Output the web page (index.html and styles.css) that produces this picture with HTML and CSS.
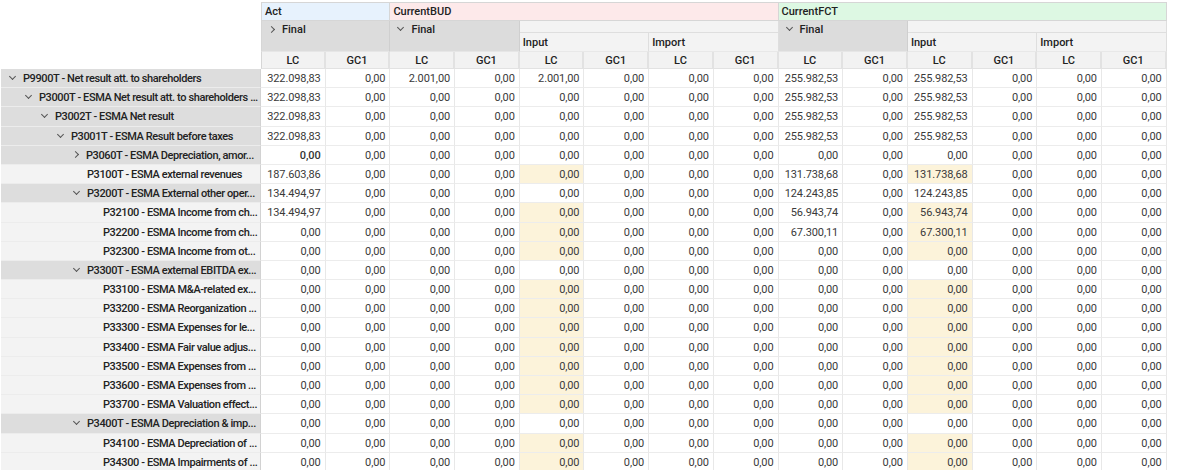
FILE: index.html
```html
<!DOCTYPE html>
<html>
<head>
<meta charset="utf-8">
<link rel="stylesheet" href="styles.css">
</head>
<body>
<div class="grid">
  <div class="corner"></div>
  <div class="h1 act">Act</div>
  <div class="h1 bud">CurrentBUD</div>
  <div class="h1 fct">CurrentFCT</div>

  <div class="fin"><i class="rt"></i>Final</div>
  <div class="fin"><i class="dn"></i>Final</div>
  <div class="emp"></div>
  <div class="fin"><i class="dn"></i>Final</div>
  <div class="emp"></div>

  <div class="sub">Input</div>
  <div class="sub">Import</div>
  <div class="sub">Input</div>
  <div class="sub">Import</div>

  <div class="m">LC</div><div class="m">GC1</div>
  <div class="m">LC</div><div class="m">GC1</div>
  <div class="m">LC</div><div class="m">GC1</div>
  <div class="m">LC</div><div class="m">GC1</div>
  <div class="m">LC</div><div class="m">GC1</div>
  <div class="m">LC</div><div class="m">GC1</div>
  <div class="m">LC</div><div class="m">GC1</div>

  <div class="lab exp l0"><i class="dn"></i>P9900T - Net result att. to shareholders</div>
  <div class="n">322.098,83</div><div class="n">0,00</div><div class="n">2.001,00</div><div class="n">0,00</div><div class="n">2.001,00</div><div class="n">0,00</div><div class="n">0,00</div><div class="n">0,00</div><div class="n">255.982,53</div><div class="n">0,00</div><div class="n">255.982,53</div><div class="n">0,00</div><div class="n">0,00</div><div class="n">0,00</div>

  <div class="lab exp l1"><i class="dn"></i>P3000T - ESMA Net result att. to shareholders ...</div>
  <div class="n">322.098,83</div><div class="n">0,00</div><div class="n">0,00</div><div class="n">0,00</div><div class="n">0,00</div><div class="n">0,00</div><div class="n">0,00</div><div class="n">0,00</div><div class="n">255.982,53</div><div class="n">0,00</div><div class="n">255.982,53</div><div class="n">0,00</div><div class="n">0,00</div><div class="n">0,00</div>

  <div class="lab exp l2"><i class="dn"></i>P3002T - ESMA Net result</div>
  <div class="n">322.098,83</div><div class="n">0,00</div><div class="n">0,00</div><div class="n">0,00</div><div class="n">0,00</div><div class="n">0,00</div><div class="n">0,00</div><div class="n">0,00</div><div class="n">255.982,53</div><div class="n">0,00</div><div class="n">255.982,53</div><div class="n">0,00</div><div class="n">0,00</div><div class="n">0,00</div>

  <div class="lab exp l3"><i class="dn"></i>P3001T - ESMA Result before taxes</div>
  <div class="n">322.098,83</div><div class="n">0,00</div><div class="n">0,00</div><div class="n">0,00</div><div class="n">0,00</div><div class="n">0,00</div><div class="n">0,00</div><div class="n">0,00</div><div class="n">255.982,53</div><div class="n">0,00</div><div class="n">255.982,53</div><div class="n">0,00</div><div class="n">0,00</div><div class="n">0,00</div>

  <div class="lab exp l4"><i class="rt"></i>P3060T - ESMA Depreciation, amor...</div>
  <div class="n b">0,00</div><div class="n">0,00</div><div class="n">0,00</div><div class="n">0,00</div><div class="n">0,00</div><div class="n">0,00</div><div class="n">0,00</div><div class="n">0,00</div><div class="n">0,00</div><div class="n">0,00</div><div class="n">0,00</div><div class="n">0,00</div><div class="n">0,00</div><div class="n">0,00</div>

  <div class="lab leaf l4">P3100T - ESMA external revenues</div>
  <div class="n">187.603,86</div><div class="n">0,00</div><div class="n">0,00</div><div class="n">0,00</div><div class="n y">0,00</div><div class="n">0,00</div><div class="n">0,00</div><div class="n">0,00</div><div class="n">131.738,68</div><div class="n">0,00</div><div class="n y">131.738,68</div><div class="n">0,00</div><div class="n">0,00</div><div class="n">0,00</div>

  <div class="lab exp l4"><i class="dn"></i>P3200T - ESMA External other oper...</div>
  <div class="n">134.494,97</div><div class="n">0,00</div><div class="n">0,00</div><div class="n">0,00</div><div class="n">0,00</div><div class="n">0,00</div><div class="n">0,00</div><div class="n">0,00</div><div class="n">124.243,85</div><div class="n">0,00</div><div class="n">124.243,85</div><div class="n">0,00</div><div class="n">0,00</div><div class="n">0,00</div>

  <div class="lab leaf l5">P32100 - ESMA Income from ch...</div>
  <div class="n">134.494,97</div><div class="n">0,00</div><div class="n">0,00</div><div class="n">0,00</div><div class="n y">0,00</div><div class="n">0,00</div><div class="n">0,00</div><div class="n">0,00</div><div class="n">56.943,74</div><div class="n">0,00</div><div class="n y">56.943,74</div><div class="n">0,00</div><div class="n">0,00</div><div class="n">0,00</div>

  <div class="lab leaf l5">P32200 - ESMA Income from ch...</div>
  <div class="n">0,00</div><div class="n">0,00</div><div class="n">0,00</div><div class="n">0,00</div><div class="n y">0,00</div><div class="n">0,00</div><div class="n">0,00</div><div class="n">0,00</div><div class="n">67.300,11</div><div class="n">0,00</div><div class="n y">67.300,11</div><div class="n">0,00</div><div class="n">0,00</div><div class="n">0,00</div>

  <div class="lab leaf l5">P32300 - ESMA Income from ot...</div>
  <div class="n">0,00</div><div class="n">0,00</div><div class="n">0,00</div><div class="n">0,00</div><div class="n y">0,00</div><div class="n">0,00</div><div class="n">0,00</div><div class="n">0,00</div><div class="n">0,00</div><div class="n">0,00</div><div class="n y">0,00</div><div class="n">0,00</div><div class="n">0,00</div><div class="n">0,00</div>

  <div class="lab exp l4"><i class="dn"></i>P3300T - ESMA external EBITDA ex...</div>
  <div class="n">0,00</div><div class="n">0,00</div><div class="n">0,00</div><div class="n">0,00</div><div class="n">0,00</div><div class="n">0,00</div><div class="n">0,00</div><div class="n">0,00</div><div class="n">0,00</div><div class="n">0,00</div><div class="n">0,00</div><div class="n">0,00</div><div class="n">0,00</div><div class="n">0,00</div>

  <div class="lab leaf l5">P33100 - ESMA M&amp;A-related ex...</div>
  <div class="n">0,00</div><div class="n">0,00</div><div class="n">0,00</div><div class="n">0,00</div><div class="n y">0,00</div><div class="n">0,00</div><div class="n">0,00</div><div class="n">0,00</div><div class="n">0,00</div><div class="n">0,00</div><div class="n y">0,00</div><div class="n">0,00</div><div class="n">0,00</div><div class="n">0,00</div>

  <div class="lab leaf l5">P33200 - ESMA Reorganization ...</div>
  <div class="n">0,00</div><div class="n">0,00</div><div class="n">0,00</div><div class="n">0,00</div><div class="n y">0,00</div><div class="n">0,00</div><div class="n">0,00</div><div class="n">0,00</div><div class="n">0,00</div><div class="n">0,00</div><div class="n y">0,00</div><div class="n">0,00</div><div class="n">0,00</div><div class="n">0,00</div>

  <div class="lab leaf l5">P33300 - ESMA Expenses for le...</div>
  <div class="n">0,00</div><div class="n">0,00</div><div class="n">0,00</div><div class="n">0,00</div><div class="n y">0,00</div><div class="n">0,00</div><div class="n">0,00</div><div class="n">0,00</div><div class="n">0,00</div><div class="n">0,00</div><div class="n y">0,00</div><div class="n">0,00</div><div class="n">0,00</div><div class="n">0,00</div>

  <div class="lab leaf l5">P33400 - ESMA Fair value adjus...</div>
  <div class="n">0,00</div><div class="n">0,00</div><div class="n">0,00</div><div class="n">0,00</div><div class="n y">0,00</div><div class="n">0,00</div><div class="n">0,00</div><div class="n">0,00</div><div class="n">0,00</div><div class="n">0,00</div><div class="n y">0,00</div><div class="n">0,00</div><div class="n">0,00</div><div class="n">0,00</div>

  <div class="lab leaf l5">P33500 - ESMA Expenses from ...</div>
  <div class="n">0,00</div><div class="n">0,00</div><div class="n">0,00</div><div class="n">0,00</div><div class="n y">0,00</div><div class="n">0,00</div><div class="n">0,00</div><div class="n">0,00</div><div class="n">0,00</div><div class="n">0,00</div><div class="n y">0,00</div><div class="n">0,00</div><div class="n">0,00</div><div class="n">0,00</div>

  <div class="lab leaf l5">P33600 - ESMA Expenses from ...</div>
  <div class="n">0,00</div><div class="n">0,00</div><div class="n">0,00</div><div class="n">0,00</div><div class="n y">0,00</div><div class="n">0,00</div><div class="n">0,00</div><div class="n">0,00</div><div class="n">0,00</div><div class="n">0,00</div><div class="n y">0,00</div><div class="n">0,00</div><div class="n">0,00</div><div class="n">0,00</div>

  <div class="lab leaf l5">P33700 - ESMA Valuation effect...</div>
  <div class="n">0,00</div><div class="n">0,00</div><div class="n">0,00</div><div class="n">0,00</div><div class="n y">0,00</div><div class="n">0,00</div><div class="n">0,00</div><div class="n">0,00</div><div class="n">0,00</div><div class="n">0,00</div><div class="n y">0,00</div><div class="n">0,00</div><div class="n">0,00</div><div class="n">0,00</div>

  <div class="lab exp l4"><i class="dn"></i>P3400T - ESMA Depreciation &amp; imp...</div>
  <div class="n">0,00</div><div class="n">0,00</div><div class="n">0,00</div><div class="n">0,00</div><div class="n">0,00</div><div class="n">0,00</div><div class="n">0,00</div><div class="n">0,00</div><div class="n">0,00</div><div class="n">0,00</div><div class="n">0,00</div><div class="n">0,00</div><div class="n">0,00</div><div class="n">0,00</div>

  <div class="lab leaf l5">P34100 - ESMA Depreciation of ...</div>
  <div class="n">0,00</div><div class="n">0,00</div><div class="n">0,00</div><div class="n">0,00</div><div class="n y">0,00</div><div class="n">0,00</div><div class="n">0,00</div><div class="n">0,00</div><div class="n">0,00</div><div class="n">0,00</div><div class="n y">0,00</div><div class="n">0,00</div><div class="n">0,00</div><div class="n">0,00</div>

  <div class="lab leaf l5">P34300 - ESMA Impairments of ...</div>
  <div class="n">0,00</div><div class="n">0,00</div><div class="n">0,00</div><div class="n">0,00</div><div class="n y">0,00</div><div class="n">0,00</div><div class="n">0,00</div><div class="n">0,00</div><div class="n">0,00</div><div class="n">0,00</div><div class="n y">0,00</div><div class="n">0,00</div><div class="n">0,00</div><div class="n">0,00</div>
</div>
</body>
</html>
```

FILE: styles.css
```css
html, body {
  margin: 0;
  padding: 0;
  background: #ffffff;
  overflow: hidden;
}

body {
  font-family: Roboto, "Liberation Sans", sans-serif;
  font-size: 11px;
  color: #333333;
}

.grid {
  display: grid;
  grid-template-columns: 261px repeat(14, 64.7px);
  grid-template-rows: 19px 12px 19px 17px;
  grid-auto-rows: 19.2px;
  margin-top: 2px;
  width: max-content;
}

.grid > div {
  box-sizing: border-box;
  white-space: nowrap;
  overflow: hidden;
}

.corner {
  grid-row: span 4;
  background: #ffffff;
}

.h1 {
  border-top: 1px solid #d6d6d6;
  border-right: 1px solid #d6d6d6;
  border-bottom: 1px solid #d6d6d6;
  padding-left: 3px;
  font-weight: 500;
  line-height: 18px;
  color: #222222;
}

.act {
  grid-column: span 2;
  background: #e7f2fd;
  border-left: 1px solid #d6d6d6;
}

.bud {
  grid-column: span 6;
  background: #fde9ea;
}

.fct {
  grid-column: span 6;
  background: #ddf8e3;
}

.fin {
  grid-column: span 2;
  grid-row: span 2;
  background: #dcdcdc;
  border-right: 1px solid #cfcfcf;
  border-bottom: 1px solid #e6e6e6;
  padding: 2px 0 0 7px;
  line-height: 14px;
  font-weight: 500;
  color: #222222;
}

.act + .bud + .fct + .fin {
  border-left: 1px solid #d6d6d6;
}

.emp {
  grid-column: span 4;
  background: #f3f3f3;
  border-right: 1px solid #dedede;
  border-bottom: 1px solid #dedede;
}

.sub {
  grid-column: span 2;
  background: #f3f3f3;
  border-right: 1px solid #dedede;
  border-bottom: 1px solid #e8e8e8;
  padding-left: 3px;
  line-height: 20px;
  font-weight: 500;
  color: #222222;
}

.m {
  background: #f2f2f2;
  border-right: 2px solid #e2e2e2;
  border-bottom: 1px solid #e2e2e2;
  text-align: center;
  line-height: 18px;
  font-weight: 500;
  color: #222222;
}

.act + .bud + .fct + .fin + .fin + .emp + .fin + .emp + .sub + .sub + .sub + .sub + .m {
  border-left: 1px solid #d6d6d6;
}

.n {
  background: #ffffff;
  border-right: 1px solid #e8e8e8;
  border-bottom: 1px solid #ececec;
  text-align: right;
  padding-right: 4px;
  line-height: 20px;
  color: #3a3a3a;
  letter-spacing: -0.1px;
}

.n.y {
  background: #fcf3da;
}

.n.b {
  font-weight: 500;
  color: #333333;
}

.lab {
  border-right: 1px solid #d2d2d2;
  border-bottom: 1px solid #ececec;
  margin-left: 1px;
  line-height: 20px;
  font-weight: 500;
  color: #222222;
  letter-spacing: -0.4px;
  text-overflow: ellipsis;
  padding-right: 2px;
}

.exp {
  background: #dddddd;
}

.leaf {
  background: #f3f3f3;
}

.exp.l0 { padding-left: 8px; }
.exp.l1 { padding-left: 24px; }
.exp.l2 { padding-left: 40px; }
.exp.l3 { padding-left: 56px; }
.exp.l4 { padding-left: 72px; }
.exp.l5 { padding-left: 88px; }

.leaf.l4 { padding-left: 86px; }
.leaf.l5 { padding-left: 102px; }

.dn,
.rt {
  display: inline-block;
  width: 4px;
  height: 4px;
  border-right: 1px solid #555555;
  border-bottom: 1px solid #555555;
  vertical-align: middle;
}

.dn {
  transform: rotate(45deg);
  margin: -5px 8px 0 1px;
}

.rt {
  transform: rotate(-45deg);
  margin: -2px 8px 0 0;
}

.fin .dn,
.fin .rt {
  margin-right: 8px;
}
```
